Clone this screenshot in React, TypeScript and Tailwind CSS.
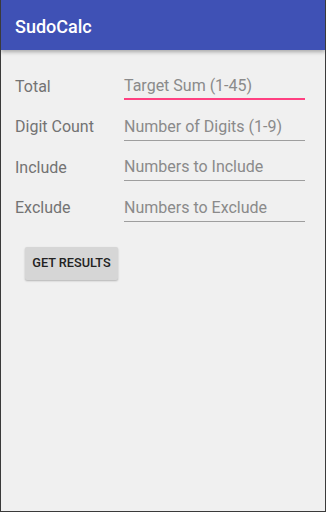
import React from "react";

const fields = [
  { label: "Total", placeholder: "Target Sum (1-45)", focused: true },
  { label: "Digit Count", placeholder: "Number of Digits (1-9)" },
  { label: "Include", placeholder: "Numbers to Include" },
  { label: "Exclude", placeholder: "Numbers to Exclude" },
];

const Row = ({
  label,
  placeholder,
  focused,
}: {
  label: string;
  placeholder: string;
  focused?: boolean;
}) => {
  return (
    <div className="flex items-stretch h-[28px]">
      <div className="w-[109px] flex items-center pt-[1px] text-[16px] text-[#737373]">{label}</div>
      <div
        className={
          focused
            ? "w-[181px] flex items-center pt-[2px] border-b-2 border-[#ff4081] text-[16px] text-[#8a8a8a]"
            : "w-[181px] flex items-center pt-[2px] pb-[1px] border-b border-[#9e9e9e] text-[16px] text-[#8a8a8a]"
        }
      >
        {placeholder}
      </div>
    </div>
  );
};

export default function App() {
  return (
    <div
      className="w-[326px] h-[512px] flex flex-col bg-[#f0f0f0] border-x border-b border-[#3a3a3a] overflow-hidden"
      style={{ fontFamily: "Roboto, 'Noto Sans', sans-serif" }}
    >
      <div className="h-[50px] shrink-0 bg-[#3f51b5] flex items-center pl-[14px] pt-[2px] shadow-[0_2px_4px_rgba(0,0,0,0.3)] relative z-10">
        <span className="text-white text-[18px] font-medium">SudoCalc</span>
      </div>
      <div className="flex flex-col pl-[14px] pt-[22px] gap-[12.5px]">
        {fields.map((f) => (
          <Row key={f.label} {...f} />
        ))}
      </div>
      <div className="pl-[24px] pt-[25px]">
        <button className="w-[93px] h-[33px] bg-[#d6d6d6] rounded-[2px] shadow-[0_1px_2px_rgba(0,0,0,0.25)] text-[12.7px] font-medium text-[#222222]">
          GET RESULTS
        </button>
      </div>
    </div>
  );
}
